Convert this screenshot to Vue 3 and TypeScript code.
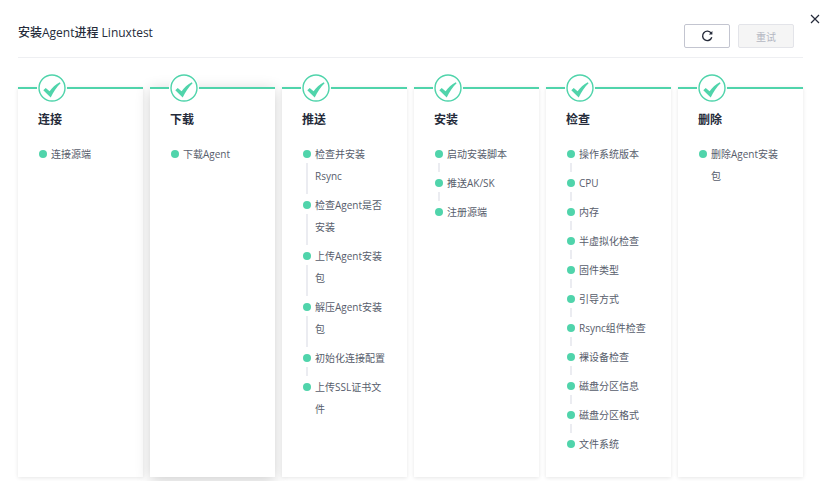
<script setup lang="ts">
import { ref } from 'vue'

interface Stage {
  name: string
  steps: string[]
}

const stages: Stage[] = [
  { name: '连接', steps: ['连接源端'] },
  { name: '下载', steps: ['下载Agent'] },
  {
    name: '推送',
    steps: [
      '检查并安装Rsync',
      '检查Agent是否安装',
      '上传Agent安装包',
      '解压Agent安装包',
      '初始化连接配置',
      '上传SSL证书文件',
    ],
  },
  { name: '安装', steps: ['启动安装脚本', '推送AK/SK', '注册源端'] },
  {
    name: '检查',
    steps: [
      '操作系统版本',
      'CPU',
      '内存',
      '半虚拟化检查',
      '固件类型',
      '引导方式',
      'Rsync组件检查',
      '裸设备检查',
      '磁盘分区信息',
      '磁盘分区格式',
      '文件系统',
    ],
  },
  { name: '删除', steps: ['删除Agent安装包'] },
]

const active = ref(1)
</script>

<template>
  <main class="dialog">
    <section class="content">
      <header class="header">
        <h1 class="title">安装Agent进程 Linuxtest</h1>
        <div class="actions">
          <button class="btn refresh" type="button" aria-label="刷新">
            <svg viewBox="0 0 12 12" width="12" height="12">
              <path d="M10.8 7.3A4.7 4.7 0 1 1 10.2 3.2" fill="none" stroke="#252b3a" stroke-width="1.4" />
              <path d="M11.4 1v3.6H7.8z" fill="#252b3a" />
            </svg>
          </button>
          <button class="btn retry" type="button" disabled>重试</button>
        </div>
      </header>
      <div class="stages">
        <article
          v-for="(stage, i) in stages"
          :key="stage.name"
          class="card"
          :class="{ active: i === active }"
          @mouseenter="active = i"
        >
          <span class="badge">
            <svg viewBox="0 0 28 28" width="28" height="28">
              <circle cx="14" cy="14" r="13" fill="#fff" stroke="#50d4ab" stroke-width="1.4" />
              <path d="M5.3 16.2L7.7 14.1L11.6 17.2C14.4 13.4 17.8 10.2 21.8 8.3L22.6 9.3C18.6 13 15.4 17.9 12.7 23.5Z" fill="#50d4ab" />
            </svg>
          </span>
          <h2 class="name">{{ stage.name }}</h2>
          <ol class="steps">
            <li v-for="step in stage.steps" :key="step" class="step">
              <span class="rail"><i class="dot"></i></span>
              <span>{{ step }}</span>
            </li>
          </ol>
        </article>
      </div>
    </section>
    <button class="close" type="button" aria-label="关闭">
      <svg viewBox="0 0 10 10" width="10" height="10">
        <path d="M1 1l8 8M9 1l-8 8" fill="none" stroke="#252b3a" stroke-width="1.2" />
      </svg>
    </button>
  </main>
</template>

<style>
body {
  margin: 0;
  background: #fff;
}
</style>

<style scoped>
.dialog {
  box-sizing: border-box;
  display: grid;
  grid-template-columns: 1fr 28px;
  min-height: 100vh;
  padding: 0 0 4px 18px;
  color: #252b3a;
  font-family: "Open Sans", "Noto Sans CJK SC", sans-serif;
  font-size: 10px;
}
.content {
  display: flex;
  flex-direction: column;
}
.header {
  display: flex;
  justify-content: space-between;
  align-items: flex-start;
  padding: 24px 9px 9px 0;
  border-bottom: 1px solid #eeeff2;
}
.title {
  margin: 0;
  font-size: 12px;
  line-height: 18px;
  font-weight: 500;
}
.actions {
  display: flex;
  gap: 8px;
}
.btn {
  box-sizing: border-box;
  display: flex;
  align-items: center;
  justify-content: center;
  height: 24px;
  padding: 0;
  border: 1px solid #c3c5d0;
  border-radius: 2px;
  background: #fff;
  font: inherit;
}
.refresh {
  width: 46px;
}
.retry {
  width: 56px;
  border-color: #e3e4e9;
  background: #f5f5f5;
  color: #b4b7c2;
}
.close {
  align-self: start;
  justify-self: start;
  display: flex;
  margin: 14px 0 0 7px;
  padding: 0;
  border: 0;
  background: none;
}
.stages {
  flex: 1;
  display: grid;
  grid-template-columns: repeat(6, minmax(0, 1fr));
  gap: 7px;
  margin-top: 29px;
}
.card {
  border-top: 2px solid #50d4ab;
  padding: 0 18px 16px 20px;
  background: #fff;
  box-shadow: 0 1px 4px rgba(0, 0, 0, 0.1);
}
.card.active {
  box-shadow: 0 3px 14px rgba(0, 0, 0, 0.2);
}
.badge {
  display: flex;
  justify-content: center;
  width: 30px;
  height: 28px;
  margin: -15px 0 0 -1px;
  background: #fff;
  border-radius: 15px;
}
.name {
  margin: 9px 0 0;
  font-size: 12px;
  line-height: 18px;
  font-weight: 600;
}
.steps {
  margin: 14px 0 0;
  padding: 0;
  list-style: none;
}
.step {
  display: flex;
  gap: 3px;
  padding-bottom: 7px;
  line-height: 22px;
  color: #575d6c;
}
.step:last-child {
  padding-bottom: 0;
}
.rail {
  flex: none;
  display: flex;
  flex-direction: column;
  align-items: center;
  gap: 5px;
  width: 10px;
  padding-top: 7px;
}
.dot {
  width: 8px;
  height: 8px;
  border-radius: 50%;
  background: #50d4ab;
}
.step:not(:last-child) .rail::after {
  content: "";
  flex: 1;
  width: 2px;
  margin-bottom: -7px;
  background: #ebecf1;
}
</style>
